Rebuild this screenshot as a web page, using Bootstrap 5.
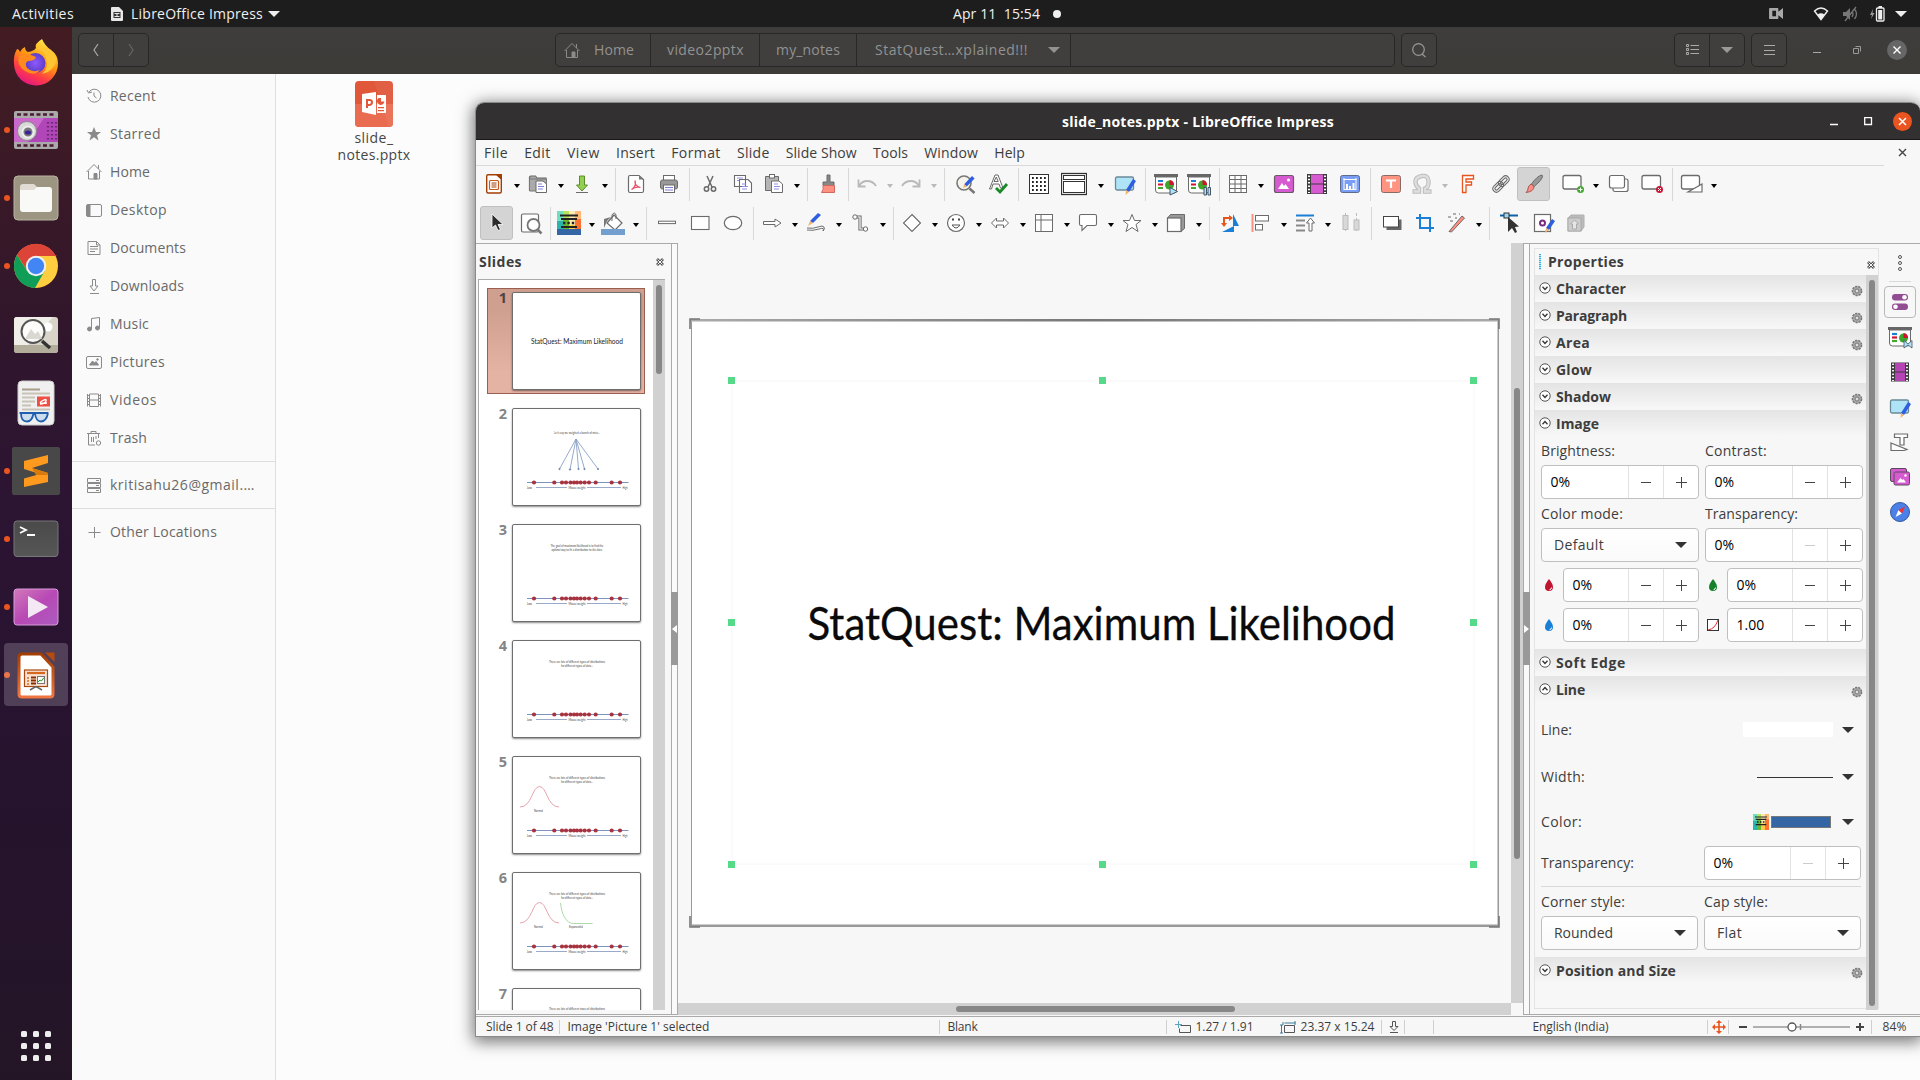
<!DOCTYPE html>
<html lang="en">
<head>
<meta charset="utf-8">
<meta name="viewport" content="width=device-width, initial-scale=1">
<title>slide_notes.pptx - LibreOffice Impress</title>
<link href="https://cdn.jsdelivr.net/npm/bootstrap@5.3.0/dist/css/bootstrap.min.css" rel="stylesheet">
<style>
html,body{height:100%}
body{font-family:"Open Sans","Noto Sans",sans-serif;font-size:14px;line-height:18px;color:#3d3d3d;overflow:hidden;width:1920px;height:1080px;background:#fcfcfc}
svg{display:block;flex:none;overflow:visible}
.fit{display:inline-block;white-space:nowrap}
/* top panel */
.toppanel{height:27px;background:#1d1d1d;color:#f0f0f0}
.topside{width:953px}
/* dock */
.dock{width:72px;background:linear-gradient(#431c22,#30162c 30%,#2c1433 45%,#25132d 75%,#241526);padding-top:1px}
.dockcell{height:68.13px;width:72px;position:relative;display:flex;align-items:center;justify-content:center}
.dockcell.run::before{content:"";position:absolute;left:4px;top:31px;width:6px;height:6px;border-radius:50%;background:#e95420}
.dockcell.cur::after{content:"";position:absolute;left:4px;top:2px;width:64px;height:63px;border-radius:4px;background:#ffffff30;z-index:0}
.dockcell svg{position:relative;z-index:1}
.appgrid{margin:auto 0 19px 21px;width:30px;gap:6px}
.appgrid i{width:6px;height:6px;border-radius:1.5px;background:#eee}
/* file manager */
.fmhead{height:47px;background:linear-gradient(#3e3d3b,#3d3b38);padding:6px 13px 0 6px;color:#929292}
.fmgrp{height:34px;border:1px solid #282725;border-radius:5px;background:#403f3d;display:flex}
.fmgrp>*{display:flex;align-items:center;justify-content:center;border-right:1px solid #282725}
.fmgrp>*:last-child{border-right:0}
.places{width:204px;border-right:1px solid #dedede;background:#fafafa;padding-top:3px}
.place{height:38px;display:flex;align-items:center;padding-left:14px;color:#696969}
.place svg{margin-right:8px}
.placeline{height:1px;background:#dedede;margin:4px 0}
.fileitem{width:110px;margin:7px 0 0 43px;color:#474747;line-height:17px;text-align:center}
/* impress window */
.officewin{position:absolute;left:475px;top:102px;width:1445px;height:935px;border:1px solid #8a8a8a;border-right:0;border-radius:9px 9px 0 0;box-shadow:0 3px 16px 2px #0008;background:#f7f7f7;overflow:hidden}
.wintitle{height:37px;background:#323030;color:#fff;font-weight:700;border-bottom:1px solid #1b1a1a}
.closebtn{width:19px;height:19px;border-radius:50%;background:#e95420}
.menus{height:25px;padding-left:8px}
.menus span.fit{margin-right:16.2px}
.hair{height:1px;background:#d9d9d9}
.toolrow{height:34px;padding-left:4px}
.tb{width:33px;height:34px;display:flex;align-items:center;justify-content:center;flex:none;border-radius:3px}
.tb.split{width:44px;justify-content:flex-start;padding-left:2px}
.tb.wide{width:53px}
.tb.on{background:#d4d4d4;border:1px solid #c0c0c0}
.tb .dd{border:3.3px solid transparent;border-top:4.5px solid #000;border-bottom:0;margin:3px 0 0 6.5px}
.tb.off .dd{border-top-color:#b9b9b9}
.tsep{width:1px;height:33px;background:#d8d8d8;margin:0 3.5px;flex:none}
.workarea{height:772px}
.slidespane{width:195px;border-top:1px solid #aaa;border-bottom:1px solid #aaa}
.slidelist{width:187px;margin-left:2px;height:731px;border-left:1px solid #aaa;border-top:1px solid #aaa;background:#fff;overflow:hidden}
.track{background:#d1d1d1;width:12px;flex:none}
.thumbbar{background:#878787;border-radius:3px}
.splitter{width:7px;border:1px solid #aaa;display:flex;align-items:center;background:#fafafa}
.grip{width:7px;margin-left:-1px;height:73px;background:#999;flex:none;margin-top:-1px}
.slrow{height:106px;margin:0 8px 10px 8px;border:1px solid transparent;padding:3px 2px 3px 0}
.slrow.sel{background:linear-gradient(#cf9f8f 20%,#e5b3a4 80%);border-color:#9a5f4e}
.slno{width:24px;text-align:center;font-size:14.5px;font-weight:700;color:#858585;line-height:12px;padding-left:6px}
.slrow.sel .slno{color:#4d4543}
.sheet{width:129px;height:98px;border:1px solid #6e6e6e;border-radius:2px;background:#fff;box-shadow:0 1px 2px #0007}
.slide{margin:76px 0 0 12px;width:809px;height:607px}
/* properties */
.deck{width:345px;margin:4px 0 5px 4px;border:1px solid #e3e3e3}
.decktitle{height:26px;padding-left:4px}
.grab{width:2px;height:16px;background:repeating-linear-gradient(#35aee0 0 1px,#bfe8f7 1px 2px)}
.sect{height:27px;background:linear-gradient(#e4e4e4,#f7f7f7 96%);width:331px;padding:0 3px 0 4px;font-weight:700}
.sect svg:first-child{margin-top:-2px;margin-right:5px}
.sect svg.gear{margin:5px 0 0 auto}
.sectbody{padding-left:6px;width:331px}
.lab{height:29px}
.spin{height:34px;border:1px solid #bfbfbf;border-radius:4px;background:#fff;color:#000;display:flex;align-items:center}
.spin span:first-child{padding-left:8.5px;flex:1}
.spin i{width:35px;height:32px;border-left:1px solid #e2e2e2;display:flex;align-items:center;justify-content:center;color:#444}
.spin i.dis{color:#ccc}
.combo{height:34px;border:1px solid #bfbfbf;border-radius:4px;background:linear-gradient(#fff,#fafafa);display:flex;align-items:center;justify-content:space-between;padding:0 11px 0 12px}
.car{border:6px solid transparent;border-top:6px solid #333;border-bottom:0}
.tabs{width:41px;padding-top:10px}
.tabcell{width:32px;height:35px;display:flex;align-items:center;justify-content:center;margin-left:5px}
.tabcell.cur{height:32px;border:1px solid #b9b9b9;border-radius:4px;margin-top:4px;margin-bottom:1px}
/* status bar */
.status{height:21px;border-top:1px solid #aaa;font-size:12px}
.status u{width:1px;height:14px;background:#d0d0d0;flex:none}
</style>
</head>
<body>
<svg width="0" height="0" style="position:absolute">
<defs>
<linearGradient id="ff" x1="0.8" y1="0" x2="0.3" y2="1"><stop offset="0" stop-color="#fff44f"/><stop offset=".45" stop-color="#ff980e"/><stop offset=".75" stop-color="#ff3b47"/><stop offset="1" stop-color="#e31587"/></linearGradient>
<radialGradient id="ffp"><stop offset="0" stop-color="#9059ff"/><stop offset="1" stop-color="#5b3ec8"/></radialGradient>
<linearGradient id="pk" x1="0" y1="0" x2="1" y2="1"><stop offset="0" stop-color="#d279ba"/><stop offset=".5" stop-color="#b849b5"/><stop offset="1" stop-color="#ab5cc0"/></linearGradient>
<linearGradient id="tm" x1="0" y1="0" x2="0" y2="1"><stop offset="0" stop-color="#4a4a4a"/><stop offset="1" stop-color="#565656"/></linearGradient>
<linearGradient id="org" x1="0" y1="0" x2="0" y2="1"><stop offset="0" stop-color="#a33e03"/><stop offset="1" stop-color="#ef7641"/></linearGradient>
<linearGradient id="edge"><stop offset="0" stop-color="#aaa"/><stop offset=".5" stop-color="#777"/><stop offset="1" stop-color="#aaa"/></linearGradient>
<g id="pencil"><path d="M8-9l2.600 2.600-7.800 8-2.600-2.400z" fill="#2f5fe0"/><path d="M.200-.800l2.600 2.400L-1 3z" fill="#f5b26b"/></g>
<g id="pal"><path fill="#6ee0c0" d="M-12-12h6v24h-6z"/><path fill="#b8e35b" d="M-6-12h6v24h-6z"/><path fill="#ffe9b0" d="M0-12h6v24H0z"/><path fill="#ffb877" d="M6-12h6v24H6z"/><path fill="#2bb3ae" d="M-12-2h6v14h-6z"/><path fill="#69b52b" d="M-6-4h6v16h-6z"/><path fill="#ffc847" d="M0 2h6v10H0z"/><path fill="#ff7033" d="M6-4h6v16H6z"/><path d="M-9-7.500H9M-8-4H8M-8 4H8" stroke="#222" stroke-width="1.800"/><path d="M-6 0H7" stroke="#222" stroke-width="2.400" stroke-dasharray="2.400 2"/></g>

<symbol id="i-new" viewBox="-13 -13 26 26"><path d="M-6-9.300H3L7.300-5V7.500q0 1.500-1.500 1.500h-11.600q-1.500 0-1.500-1.500v-15.300q0-1.500 1.300-1.500z" fill="#fff" stroke="#a33e03" stroke-width="1.400"/><path d="M1-9.900h7V-4z" fill="#a33e03"/><rect x="-4.500" y="-3.500" width="9" height="9" rx="1" fill="none" stroke="#c55a20" stroke-width="1.200"/><path d="M-2.500-1h5M-2.500 1h5M-2.500 3h5" stroke="#a33e03"/></symbol>
<symbol id="i-open" viewBox="-13 -13 26 26"><path d="M-8.500 6.500v-13.500l1-1h5l1.500 2h9v3.500" fill="#aaa" stroke="#6b6b6b" stroke-width="1.200"/><path d="M-8.500 7V-5h17v12z" fill="#aaa" stroke="#777"/><path d="M-2-3h7l3.500 3v8.500H-2z" fill="#fff" stroke="#6b6b6b"/><path d="M0 0h4M0 2.500h6M0 5h5" stroke="#7f7fe0"/></symbol>
<symbol id="i-save" viewBox="-13 -13 26 26"><path d="M-2.500-8h5V1h3L0 7l-5.500-6h3z" fill="#92d050" stroke="#5e8a2b"/><path d="M-6 8.500H6" stroke="#6b6b6b"/></symbol>
<symbol id="i-pdf" viewBox="-13 -13 26 26"><path d="M-6-8.500h9l4.500 4v11.500q0 1.500-1.500 1.500H-6q-1.500 0-1.500-1.500V-7q0-1.500 1.500-1.500z" fill="#fff" stroke="#6b6b6b" stroke-width="1.200"/><path d="M3-8.500v4h4.500z" fill="#777"/><path d="M-4.500 5.500Q1 2-1-3.500q-.800 5.500 5.500 7Q0 2-4.500 5.500z" fill="none" stroke="#e8536a" stroke-width="1.200"/></symbol>
<symbol id="i-print" viewBox="-13 -13 26 26"><rect x="-5.500" y="-8.500" width="11" height="5" fill="#fff" stroke="#6b6b6b"/><rect x="-8.500" y="-4" width="17" height="9" rx="2" fill="#999" stroke="#6b6b6b"/><rect x="-5.500" y="1" width="11" height="7.500" fill="#fff" stroke="#6b6b6b"/><path d="M-4 3.500h8M-4 6h8" stroke="#7f7fe0"/></symbol>
<symbol id="i-cut" viewBox="-13 -13 26 26"><g fill="none" stroke="#6b6b6b" stroke-width="1.500"><path d="M-3-8l5 11M3-8l-5 11"/><circle cx="-3.500" cy="5" r="2.200"/><circle cx="3.500" cy="5" r="2.200"/></g></symbol>
<symbol id="i-copy" viewBox="-13 -13 26 26"><g fill="#fff" stroke="#6b6b6b" stroke-width="1.100"><path d="M-8.500-8.500h11v11h-11zM-3.500-4.500H5L8.500-1v9.500h-12z"/></g><path d="M-6-6h6M-6-3.500h2M-1 0h4M-1 2.500h6M-1 5h5" stroke="#8f8fe8"/></symbol>
<symbol id="i-paste" viewBox="-13 -13 26 26"><path d="M-8.500-7.500h13v14h-13z" fill="#b5b5b5" stroke="#6b6b6b"/><rect x="-4.500" y="-9.500" width="5" height="3.500" fill="#fff" stroke="#6b6b6b"/><path d="M-2.500-3H5L8.500 0v8.500h-11z" fill="#fff" stroke="#6b6b6b"/><path d="M0 0h4M0 2.500h6M0 5h5" stroke="#8f8fe8"/></symbol>
<symbol id="i-clone" viewBox="-13 -13 26 26"><path d="M-1-9h3v7h4v3.500h-11v-3.500h4z" fill="#888" stroke="#6b6b6b"/><path d="M-5 1.500H6.500v7h-13q2.500-3 1.500-7z" fill="#ff8f80" stroke="#d06a60"/></symbol>
<symbol id="i-undo" viewBox="-13 -13 26 26"><path d="M-8.500-4.500v7h7M-8 2q3-5 8-5 6 0 9 5" fill="none" stroke="#b9b9b9" stroke-width="1.800"/></symbol>
<symbol id="i-redo" viewBox="-13 -13 26 26"><path d="M8.500-4.500v7h-7M8 2q-3-5-8-5-6 0-9 5" fill="none" stroke="#b9b9b9" stroke-width="1.800"/></symbol>
<symbol id="i-find" viewBox="-13 -13 26 26"><circle cx="-1" cy="-1" r="7" fill="#f6f3ea" stroke="#777" stroke-width="1.600"/><path d="M4.500 4.500l5 4.500" stroke="#777" stroke-width="2.500"/><use href="#pencil" x="-1" y="1"/></symbol>
<symbol id="i-spell" viewBox="-13 -13 26 26"><path d="M-8.500 5l5.500-14h3L5 4H2.500L1 0h-6l-1.500 5zM-4-2.500H.200L-1.700-7z" fill="#fff" stroke="#6b6b6b"/><path d="M-2 4l4 4 7-8" fill="none" stroke="#188a28" stroke-width="2.800"/></symbol>
<symbol id="i-grid" viewBox="-13 -13 26 26"><rect x="-9.500" y="-9.500" width="19" height="19" fill="#fff" stroke="#333"/><g stroke="#222" stroke-width="1.800" stroke-dasharray="1.800 2.200"><path d="M-7-6H8M-7-2H8M-7 2H8M-7 6H8"/></g></symbol>
<symbol id="i-views" viewBox="-13 -13 26 26"><g fill="#fff" stroke="#333"><rect x="-12.500" y="-10.500" width="25" height="21" stroke-width="1.300"/><rect x="-10.500" y="-8.500" width="21" height="4"/><rect x="-10.500" y="-2.500" width="21" height="11"/></g></symbol>
<symbol id="i-master" viewBox="-13 -13 26 26"><rect x="-9.500" y="-7" width="18" height="13" rx="1.500" fill="#aee3f8" stroke="#6b8a96" stroke-width="1.300"/><path d="M8-5l3 2-7 11-3-2z" fill="#2f5fe0"/><path d="M1 6l3 2-3.500 3z" fill="#f5b26b"/></symbol>
<g id="pres"><path d="M-12-8.500h24" stroke="#666" stroke-width="3"/><path d="M-10.500-7V6q0 3 3 3h15q3 0 3-3V-7z" fill="#fff" stroke="#6b6b6b"/><path d="M-8-3h5" stroke="#1c7fd6" stroke-width="2.200"/><path d="M-8 .500h5" stroke="#d0142f" stroke-width="2.200"/><path d="M-8 4h5" stroke="#43a82e" stroke-width="2.200"/><circle cx="3.500" cy="1" r="4.500" fill="#3fa52b"/><path d="M3.500 1v-5a5 5 0 0 1 4.500 5z" fill="#d0142f"/></g>
<symbol id="i-play" viewBox="-13 -13 26 26"><use href="#pres"/><path d="M4 3.500l7.500 4L4 11z" fill="#aee3f8" stroke="#456"/></symbol>
<symbol id="i-pause" viewBox="-13 -13 26 26"><use href="#pres"/><path d="M5 3.500h2.500V11H5zM9 3.500h2.500V11H9z" fill="#aee3f8" stroke="#456"/></symbol>
<symbol id="i-trans" viewBox="-13 -13 26 26"><use href="#pres"/><path d="M4 3.500l4 3.500 4-3.500V11L8 8l-4 3z" fill="#aee3f8" stroke="#456" stroke-width=".8"/></symbol>
<symbol id="i-table" viewBox="-13 -13 26 26"><rect x="-8.500" y="-8.500" width="17" height="17" fill="#fff" stroke="#6b6b6b"/><path d="M-3-8v16M3-8v16M-8-4.500H8M-8 0H8M-8 4.500H8" stroke="#6b6b6b"/></symbol>
<symbol id="i-image" viewBox="-13 -13 26 26"><rect x="-9.500" y="-8.500" width="19" height="17" rx="2" fill="#d75bd0" stroke="#6b5a6b" stroke-width="1.200"/><path d="M-6 5l4-6 2 3 1.500-2L5 5z" fill="#fff"/><circle cx="4.500" cy="-4" r="1.600" fill="#fff"/></symbol>
<symbol id="i-video" viewBox="-13 -13 26 26"><rect x="-10" y="-10" width="20" height="20" fill="#3d3d3d"/><path d="M-6-9.500H6v9H-6zM-6 .500H6v9H-6z" fill="#d65bd0"/><path d="M-8-8.500V9M8-8.500V9" stroke="#fff" stroke-width="2" stroke-dasharray="1.500 1.800"/></symbol>
<symbol id="s-anim" viewBox="-13 -13 26 26"><rect x="-9" y="-9.500" width="18" height="19" fill="#3d3d3d"/><path d="M-5-9H5v8.500H-5zM-5 .500H5V9H-5z" fill="#b545b5"/><path d="M-7-8.500V9M7-8.500V9" stroke="#fff" stroke-width="1.800" stroke-dasharray="1.500 1.800"/></symbol>
<symbol id="i-chart" viewBox="-13 -13 26 26"><rect x="-9.500" y="-8.500" width="19" height="17" rx="2" fill="#7a9df5" stroke="#5b6b8a"/><path d="M-6-6V6M-6 5.500H6.500M6-6V5M-6.500-4.500H6.500" stroke="#fff"/><path d="M-4 5V0h2v5zM-1 5v-3h2v3zM2.500 5v-6h2v6z" fill="#fff"/></symbol>
<symbol id="i-text" viewBox="-13 -13 26 26"><rect x="-9.500" y="-8.500" width="19" height="17" rx="2" fill="#ff9482" stroke="#8a6a66"/><path d="M-5-3.500H5M0-3.500v7.500" stroke="#fff" stroke-width="2.200"/></symbol>
<symbol id="i-omega" viewBox="-13 -13 26 26"><path d="M-9.500 7.500h6.500V4.500Q-7 1-6.500-3T0-8t6.500 5-3.500 7.500v3h6.500" fill="none" stroke="#bcbcbc" stroke-width="4.400"/><path d="M-8.500 7.500h5.500V4.500Q-7 1-6.500-3T0-8t6.500 5-3.500 7.500v3h5.500" fill="none" stroke="#dedede" stroke-width="2.400"/></symbol>
<symbol id="i-font" viewBox="-13 -13 26 26"><path d="M-5.500-8.500h11v3.500h-7.500v3h5.500v3h-5.500v7.500h-3.500z" fill="#fff" stroke="#e8541c" stroke-width="1.300"/></symbol>
<symbol id="i-link" viewBox="-13 -13 26 26"><g transform="rotate(-45)" fill="none" stroke="#6b6b6b" stroke-width="1.100"><rect x="-10" y="-3.500" width="12" height="7" rx="3.500"/><rect x="-8" y="-1.500" width="8" height="3" rx="1.500"/><rect x="-2" y="-3.500" width="12" height="7" rx="3.500"/><rect x="0" y="-1.500" width="8" height="3" rx="1.500"/></g></symbol>
<symbol id="i-brush" viewBox="-13 -13 26 26"><path d="M8-9q2 2-4 8l-4 3.500L-2.500 0Q3-8 8-9z" fill="#999" stroke="#6b6b6b"/><path d="M-3 0l3 2.500q0 5-8 6 2-1.500 2-4T-3 0z" fill="#ff8f80" stroke="#a55"/></symbol>
<symbol id="i-newslide" viewBox="-13 -13 26 26"><rect x="-10" y="-8.500" width="18" height="13.500" rx="2" fill="#fff" stroke="#6b6b6b" stroke-width="1.300"/><circle cx="7.500" cy="5.500" r="3.500" fill="#43a82e"/><path d="M5.500 5.500h4M7.500 3.500v4" stroke="#fff"/></symbol>
<symbol id="i-dup" viewBox="-13 -13 26 26"><g fill="#fff" stroke="#6b6b6b" stroke-width="1.200"><rect x="-6" y="-5" width="15" height="12.500" rx="2"/><rect x="-9.500" y="-8.500" width="15" height="12.500" rx="2"/></g></symbol>
<symbol id="i-del" viewBox="-13 -13 26 26"><rect x="-10" y="-8.500" width="18.500" height="13.500" rx="2" fill="#fff" stroke="#6b6b6b" stroke-width="1.300"/><circle cx="7.500" cy="5.500" r="3.500" fill="#c9183a"/><path d="M6 4l3 3M9 4L6 7" stroke="#fff"/></symbol>
<symbol id="i-layout" viewBox="-13 -13 26 26"><rect x="-9.500" y="-8.500" width="18" height="13.500" rx="2" fill="#fff" stroke="#6b6b6b" stroke-width="1.300"/><path d="M11 0v8H-3z" fill="#fff" stroke="#6b6b6b" stroke-width="1.200"/></symbol>

<symbol id="i-select" viewBox="-13 -13 26 26"><path d="M-5-9v14l3.500-3L1 7.500l2.500-1L1 1.500h5z" fill="#2c2c2c" stroke="#fff" stroke-width=".8"/></symbol>
<symbol id="i-zoom" viewBox="-13 -13 26 26"><rect x="-8.500" y="-9" width="17" height="18" rx="1.500" fill="#fff" stroke="#6b6b6b" stroke-width="1.200"/><circle cx="3.500" cy="2" r="6" fill="#fff" stroke="#777" stroke-width="1.800"/><path d="M8 7l3.500 3.500" stroke="#777" stroke-width="2.500"/></symbol>
<symbol id="i-linecol" viewBox="-13 -13 26 26"><use href="#pal"/><path fill="#3465a4" d="M-12 6h24v6h-24z"/></symbol>
<symbol id="i-fillcol" viewBox="-13 -13 26 26"><path d="M-9 5v-9l7-2-4 4z" fill="#777"/><path d="M1-8l8 8-7 7-8-7z" fill="#fff" stroke="#6b6b6b" stroke-width="1.200"/><path d="M-1-2v-6q2.500-4 4 0v4" fill="none" stroke="#6b6b6b"/><path fill="#729fcf" d="M-12 6h24v6h-24z"/></symbol>
<symbol id="i-line" viewBox="-13 -13 26 26"><rect x="-8.500" y="-1.800" width="17" height="2.400" fill="#fff" stroke="#6b6b6b"/></symbol>
<symbol id="i-rect" viewBox="-13 -13 26 26"><rect x="-8.500" y="-6.500" width="17.500" height="13" fill="#fff" stroke="#6b6b6b" stroke-width="1.100"/></symbol>
<symbol id="i-oval" viewBox="-13 -13 26 26"><ellipse rx="8.700" ry="6.700" fill="#fff" stroke="#6b6b6b" stroke-width="1.200"/></symbol>
<symbol id="i-arrow" viewBox="-13 -13 26 26"><path d="M-8.500-1.500H3V-4l6 4-6 4V1.500H-8.500z" fill="#fff" stroke="#6b6b6b"/></symbol>
<symbol id="i-curve" viewBox="-13 -13 26 26"><path d="M2-10l3 2-8 8-3-2z" fill="#2f5fe0"/><path d="M-6-2l3 2-5 3z" fill="#f5b26b"/><path d="M-9 7q6 1 12-1t4 2q2-2 1-4t-6 0-11 1" fill="#fff" stroke="#6b6b6b"/></symbol>
<symbol id="i-conn" viewBox="-13 -13 26 26"><path d="M-4-6h4V6h4" fill="none" stroke="#6b6b6b" stroke-width="3.200"/><path d="M-4-6h4V6h4" fill="none" stroke="#fff" stroke-width="1.200"/><g fill="#fff" stroke="#6b6b6b"><circle cx="-5" cy="-6" r="2.200"/><circle cx="5.500" cy="6" r="2.200"/></g></symbol>
<symbol id="i-diamond" viewBox="-13 -13 26 26"><path d="M0-8.500L8.500 0 0 8.500-8.500 0z" fill="#fff" stroke="#6b6b6b" stroke-width="1.100"/></symbol>
<symbol id="i-smile" viewBox="-13 -13 26 26"><circle r="8.500" fill="#fff" stroke="#6b6b6b" stroke-width="1.200"/><path d="M-4-3.500h2M2-3.500h2" stroke="#444" stroke-width="2"/><path d="M-4 2q4 6 8 0z" fill="#fff" stroke="#555"/></symbol>
<symbol id="i-dbl" viewBox="-13 -13 26 26"><path d="M-8.500 0l5-5v3h7v-3l5 5-5 5V2h-7v3z" fill="#fff" stroke="#6b6b6b"/></symbol>
<symbol id="i-flow" viewBox="-13 -13 26 26"><rect x="-8.500" y="-8.500" width="17" height="17" fill="#fff" stroke="#6b6b6b"/><path d="M-3-8v16M-8-3H8" stroke="#6b6b6b"/></symbol>
<symbol id="i-call" viewBox="-13 -13 26 26"><path d="M-7-8.500H7q1.500 0 1.500 1.500v8q0 1.500-1.500 1.500H-1l-5 5v-5h-1q-1.500 0-1.500-1.500v-8q0-1.500 1.500-1.500z" fill="#fff" stroke="#6b6b6b" stroke-width="1.100"/></symbol>
<symbol id="i-star" viewBox="-13 -13 26 26"><path d="M0-8.500l2.500 6H9L4 1.500l2 7-6-4-6 4 2-7-5-4h6.500z" fill="#fff" stroke="#6b6b6b"/></symbol>
<symbol id="i-cube" viewBox="-13 -13 26 26"><path d="M-8.500-5l3-3.500h14v14L5 8.500z" fill="#999" stroke="#6b6b6b"/><rect x="-8.500" y="-5" width="13.500" height="13.500" fill="#fff" stroke="#6b6b6b" stroke-width="1.200"/></symbol>
<symbol id="i-rot" viewBox="-13 -13 26 26"><path d="M3-9l6 12H3zM-8 9H4V3z" fill="#1c7fd6"/><path d="M-6 2v-7h6" fill="none" stroke="#e8541c" stroke-width="2"/><path d="M-9 0h6l-3 4zM-1-8v6l4-3z" fill="#e8541c"/></symbol>
<symbol id="i-align" viewBox="-13 -13 26 26"><path d="M-8.500-9V9" stroke="#ff8f80" stroke-width="2"/><g fill="#fff" stroke="#6b6b6b"><rect x="-5.500" y="-7.500" width="13" height="5.500"/><rect x="-5.500" y="1.500" width="7" height="5.500"/></g></symbol>
<symbol id="i-arr" viewBox="-13 -13 26 26"><path d="M-9-7.500H9" stroke="#1c7fd6" stroke-width="2"/><path d="M-9-2.500h9M-9 2.500h9M-9 7.500h9" stroke="#888" stroke-width="2"/><path d="M5.500-5l4 5h-2.500v8H4V0H1.500z" fill="#fff" stroke="#6b6b6b"/></symbol>
<symbol id="i-dist" viewBox="-13 -13 26 26"><path d="M-5.500-10V10M5.500-10V10" stroke="#bbb" stroke-dasharray="3 2"/><g fill="#d8d8d8" stroke="#bbb"><rect x="-8" y="-7.500" width="5" height="14"/><rect x="3" y="-3" width="5" height="10"/></g></symbol>
<symbol id="i-shadow" viewBox="-13 -13 26 26"><rect x="-5.500" y="-3.500" width="15" height="10.500" fill="#666"/><rect x="-8.500" y="-6.500" width="15" height="10.500" fill="#fff" stroke="#444"/></symbol>
<symbol id="i-crop" viewBox="-13 -13 26 26"><path d="M-5-9V5H9M-9-5H5V9" fill="none" stroke="#1c7fd6" stroke-width="2"/></symbol>
<symbol id="i-wand" viewBox="-13 -13 26 26"><path d="M-7 8.500L6-7l2.500 2L-4.500 9z" fill="#ff8f80" stroke="#6b6b6b"/><path d="M-8-6h3M-3-9h3M-6-2h3M-1-5h2M3-9h1" stroke="#666"/></symbol>
<symbol id="i-pts" viewBox="-13 -13 26 26"><path d="M-10-7.500H8" stroke="#0e62a8" stroke-width="2"/><rect x="-6" y="-10" width="5" height="5" fill="#9ad8f5" stroke="#333"/><path d="M-2-6V9l4-4 3 5 2-1-2-5 4-.500z" fill="#333"/></symbol>
<symbol id="i-glue" viewBox="-13 -13 26 26"><rect x="-8.500" y="-8.500" width="16" height="17" fill="#fff" stroke="#6b6b6b" stroke-width="1.200"/><circle cx="-.500" cy="0" r="2.500" fill="none" stroke="#7b2d82" stroke-width="2"/><path d="M9-4l3 2-6 9-3-2z" fill="#2f5fe0"/><path d="M3 5l3 2-4 3z" fill="#f5b26b"/></symbol>
<symbol id="i-ext" viewBox="-13 -13 26 26"><path d="M-8-5l3-3h13v12l-3 4H-8z" fill="#bbb" stroke="#b0b0b0"/><rect x="-8" y="-5" width="13" height="13" fill="#ccc" stroke="#aaa"/><path d="M-1.500-3l4 4H.500v5h-4V1h-2z" fill="#e6e6e6" stroke="#aaa"/></symbol>

<symbol id="s-props" viewBox="-13 -13 26 26"><rect x="-8" y="-8" width="16" height="6.500" rx="3.200" fill="#924c92"/><rect x="-8" y="1.500" width="16" height="6.500" rx="3.200" fill="#924c92"/><circle cx="4.500" cy="-4.800" r="2.300" fill="#fff"/><circle cx="-4.500" cy="4.800" r="2.300" fill="#fff"/></symbol>
<symbol id="s-style" viewBox="-13 -13 26 26"><path d="M-5.500-8H7.500v3.500H4V3H0v-7.500h-5.500zM-9 1L7 7.500 4 8.500H-9z" fill="#fff" stroke="#6b6b6b" stroke-width="1.200"/></symbol>
<symbol id="s-gal" viewBox="-13 -13 26 26"><rect x="-9.500" y="-8.500" width="16" height="13" rx="1.500" fill="#d75bd0" stroke="#5b4a5b"/><rect x="-6" y="-5" width="15.500" height="13" rx="1.500" fill="#d75bd0" stroke="#5b4a5b"/><path d="M-3 5.500l3.500-4.500 2 2 1-1L6 5.500z" fill="#fff"/><circle cx="5.500" cy="-1.500" r="1.200" fill="#fff"/></symbol>
<symbol id="s-nav" viewBox="-13 -13 26 26"><circle r="9.500" fill="#4a80e8" stroke="#355a9c"/><path d="M-4.500 5l3-7L2 1.500z" fill="#fff"/><path d="M5-5.500L-1.500-2 2 1.500z" fill="#e33"/></symbol>

<symbol id="gear" viewBox="-6 -6 12 12"><circle r="4.600" fill="#aaa" stroke="#777" stroke-width="1.500" stroke-dasharray="2.200 1"/><circle r="2" fill="#ddd" stroke="#777"/></symbol>
<symbol id="dn" viewBox="-6 -6 12 12"><circle r="5.200" fill="#fff" stroke="#555"/><path d="M-2.500-1.200L0 1.500l2.500-2.700" fill="none" stroke="#333" stroke-width="1.300"/></symbol>
<symbol id="up" viewBox="-6 -6 12 12"><circle r="5.200" fill="#fff" stroke="#555"/><path d="M-2.500 1.200L0-1.500l2.500 2.700" fill="none" stroke="#333" stroke-width="1.300"/></symbol>
<symbol id="xx" viewBox="-4 -4 8 8"><path d="M-3-3l6 6M3-3l-6 6" stroke="#555" stroke-width="2.800"/><path d="M-2.500-2.500l5 5M2.500-2.500l-5 5" stroke="#f7f7f7" stroke-width="1"/></symbol>
<symbol id="mi" viewBox="-6 -6 12 12"><path d="M-5 .500h10" stroke="currentColor"/></symbol>
<symbol id="pl" viewBox="-6 -6 12 12"><path d="M-5 .500h11M.500-5v11" stroke="currentColor"/></symbol>
<symbol id="drop" viewBox="-5 -7 10 14"><path d="M0-6q4 5 4 8a4 4 0 0 1-8 0q0-3 4-8z" fill="currentColor"/><path d="M2.500 2.500q0 2-2 2.300" stroke="#fff" fill="none"/></symbol>
</defs>
</svg>

<div class="d-flex flex-column h-100">
  <header class="toppanel d-flex align-items-center">
    <div class="topside d-flex align-items-center">
      <span class="fit" data-w="62" style="margin-left:12px">Activities</span>
      <svg width="12" height="14" viewBox="0 0 12 14" style="margin-left:37px"><path d="M0 1q0-1 1-1h7l4 4v9q0 1-1 1H1q-1 0-1-1z" fill="#e8e8e8"/><rect x="2.500" y="5" width="7" height="6" fill="#333"/><path d="M3.500 6.500h5M3.500 9.500h5M6 6v4" stroke="#e8e8e8"/></svg>
      <span class="fit" data-w="132" style="margin-left:8px">LibreOffice Impress</span>
      <span class="car" style="border-top-color:#eee;margin-left:5px"></span>
    </div>
    <span class="fit" data-w="87" style="white-space:pre">Apr 11  15:54</span>
    <svg width="8" height="8" style="margin-left:13px"><circle cx="4" cy="4" r="4" fill="#f0f0f0"/></svg>
    <svg width="15" height="13" viewBox="0 0 16 14" style="margin-left:708px"><path d="M0 2q0-1 1-1h8q1 0 1 1v3l5-4v12l-5-4v3q0 1-1 1H1q-1 0-1-1z" fill="#a9a9a9"/><rect x="3.500" y="4" width="4" height="6" fill="#1d1d1d"/></svg>
    <svg width="16" height="14" viewBox="0 0 16 14" style="margin-left:29px"><path d="M1.500 4Q8-2 14.500 4L8 12.500z" fill="none" stroke="#eee" stroke-width="1.400"/><path d="M4.500 7.500q3.500-2.500 7 0L8 13z" fill="#eee"/></svg>
    <svg width="16" height="14" viewBox="0 0 16 14" style="margin-left:13px"><path d="M1 5h3l4-4v12L4 9H1z" fill="#777"/><path d="M10 4q2 3 0 6M12.500 2q4 5 0 10M14 0L3 14" stroke="#777" fill="none" stroke-width="1.300"/></svg>
    <svg width="15" height="16" viewBox="0 0 15 16" style="margin-left:12px"><path d="M3 3L0 9h2l-1 4 3.500-6h-2z" fill="#999"/><rect x="6.500" y="2" width="7.500" height="13" rx="1" fill="none" stroke="#eee" stroke-width="1.300"/><path d="M8.200 4h4v9.500h-4zM8.500 0h3.500v2H8.500z" fill="#eee"/></svg>
    <span class="car" style="border-top-color:#eee;margin-left:10px"></span>
  </header>

  <div class="d-flex flex-grow-1">
    <nav class="dock d-flex flex-column">
      <div class="dockcell"><svg width="48" height="48" viewBox="-24 -24 48 48"><path d="M-19-13q2 0 3 3 2-4 5-5 0 4 3 5 6-1 8-4-2-4 6-9 3 7 9 11 7 5 7 13A22 22 0 0 1-22 2q-1-8 3-15z" fill="url(#ff)"/><circle cx="-.500" cy="1" r="10" fill="url(#ffp)"/><path d="M-17-6q8-4 17 1-1 4-8 4-4 2-1 7 5 5 13 2Q-2 15-11 9t-6-15z" fill="#ff8a1d"/><path d="M-1-14q9 1 11 10 3 10-4 16 13-3 15-16-2 0-3-4-2-5-10-7z" fill="#ffc634"/></svg></div>
      <div class="dockcell run"><svg width="48" height="48" viewBox="-24 -24 48 48"><rect x="-22" y="-19" width="44" height="38" rx="2" fill="#aaa"/><path d="M-19-15.500h38M-19 15.500h38" stroke="#4a1d33" stroke-width="2.500" stroke-dasharray="4 2.500"/><path d="M-22-12h44v24h-44z" fill="#b046b8"/><path d="M-22-12h30l-16 24h-14z" fill="#ca68cc"/><path d="M12-8V10M16-8V10M20-8V10" stroke="#6b2a74" stroke-width="2.200" stroke-dasharray="1.500 2.500"/><circle cx="-9" cy="1" r="9.500" fill="#d9d9d9" stroke="#888"/><circle cx="-8" cy="2" r="5.500" fill="#777" stroke="#eee" stroke-width="2"/><ellipse cx="-8" cy="2.500" rx="3" ry="2" fill="#3b1f9b"/></svg></div>
      <div class="dockcell run"><svg width="48" height="48" viewBox="-24 -24 48 48"><rect x="-22" y="-22" width="44" height="44" rx="4" fill="#9c9582" stroke="#b8b2a2"/><path d="M-16-11q0-3 3-3h11l3 3H14v5h-30z" fill="#e0dcd4"/><path d="M-16-8h14l3-3H13q3 0 3 3V11q0 3-3 3h-26q-3 0-3-3z" fill="#f9f9f7"/></svg></div>
      <div class="dockcell run"><svg width="48" height="48" viewBox="-24 -24 48 48"><circle r="22" fill="#ffcd40"/><path d="M-19.050-11A22 22 0 0 1 19.050-11L21-10H0z" fill="#db4437"/><path d="M0-10h20a22 22 0 0 0-39-1l10.500 16z" fill="#db4437"/><path d="M-19.050-11A22 22 0 0 0-1 22L8.700 5-8.700 5z" fill="#0f9d58"/><circle r="10.200" fill="#f1f1f1"/><circle r="8.200" fill="#4285f4"/></svg></div>
      <div class="dockcell"><svg width="48" height="48" viewBox="-24 -24 48 48"><rect x="-22" y="-18" width="44" height="36" rx="3" fill="#d8d5c8"/><path d="M-22-15q0-3 3-3h36L-8 10h-14z" fill="#efeee8"/><path d="M-22 10h44v5q0 3-3 3h-38q-3 0-3-3z" fill="#b3ad9c"/><circle cx="12" cy="-8" r="4.500" fill="#fff"/><circle cx="-3" cy="-3.500" r="11.500" fill="#fffc" stroke="#555" stroke-width="2"/><path d="M-11 4L-5-6l4 5 3-3 4 8z" fill="#d9d9d2"/><path d="M6 6l8 7" stroke="#333" stroke-width="3.500"/></svg></div>
      <div class="dockcell"><svg width="48" height="48" viewBox="-24 -24 48 48"><rect x="-18" y="-22" width="36" height="44" rx="4" fill="#f0f0f0" stroke="#ccc"/><path d="M-14-13.500H4" stroke="#a89c8a" stroke-width="2"/><path d="M-14-9.500h28M-14-5.500h13M-14-1.500h13M-14 2.500h9M-14 6.500h28" stroke="#c9c3b5" stroke-width="2"/><rect x="1" y="-6.500" width="13" height="10" fill="#ee4f44"/><path d="M4 1q5 0 6-3t-4 0 5 2" fill="none" stroke="#fff" stroke-width="1.300"/><path d="M-16.500 10h29M-15 10.500q0 8 6 8 5 0 6.500-8M-1 10.500q1 8 6 8t7-8" fill="#cde" stroke="#1f5fae" stroke-width="1.800"/></svg></div>
      <div class="dockcell run"><svg width="48" height="48" viewBox="-24 -24 48 48"><rect x="-24" y="-24" width="48" height="48" rx="2" fill="#484848"/><path d="M12-16v8L-4-3l16 5v9l-24 5V7.500L4 3l-16-5v-8z" fill="#ff9a1f"/><path d="M-4-3l16 5v2L0 4z" fill="#d97a0c"/></svg></div>
      <div class="dockcell run"><svg width="48" height="48" viewBox="-24 -24 48 48"><rect x="-22" y="-18" width="44" height="35.500" rx="3" fill="url(#tm)" stroke="#777"/><path d="M-16-12l6 3-6 3M-9-4h8" fill="none" stroke="#fff" stroke-width="1.800"/></svg></div>
      <div class="dockcell run"><svg width="48" height="48" viewBox="-24 -24 48 48"><rect x="-22" y="-18" width="44" height="36" rx="3" fill="url(#pk)" stroke="#d99ad9"/><path d="M-8-11L12 0-8 11z" fill="#f5e8f5"/></svg></div>
      <div class="dockcell run cur"><svg width="48" height="48" viewBox="-24 -24 48 48"><path d="M-14-21H5L17-8V19q0 3-3 3h-28q-3 0-3-3v-37q0-3 3-3z" fill="#fff" stroke="url(#org)" stroke-width="3"/><path d="M9-22.500h9.500V-13z" fill="#b84a0c"/><rect x="-11.500" y="-5" width="23" height="16.500" fill="#f9e2d3" stroke="#a84a10" stroke-width="1.200"/><path d="M-9-2H9" stroke="#d6671c" stroke-width="2.200"/><path d="M-9 3h2M-9 6h2M-9 9h2" stroke="#e58a4f" stroke-width="2"/><path d="M-5 2.500h5M-5 5.500h5M-5 8.500h5" stroke="#8a2e00" stroke-width="1.800"/><rect x="1.500" y="1.500" width="7" height="7" fill="#fff" stroke="#777"/><path d="M2 7l2-2 1.500 1L8 2.500" stroke="#2a9a2a" fill="none"/><path d="M-6 15l5-3h2l5 3" stroke="#666" fill="none" stroke-width="1.500"/></svg></div>
      <div class="appgrid d-flex flex-wrap"><i></i><i></i><i></i><i></i><i></i><i></i><i></i><i></i><i></i></div>
    </nav>

    <main class="flex-grow-1 d-flex flex-column">
      <div class="fmhead d-flex">
        <div class="fmgrp" style="width:71px"><span style="width:35px"><svg width="6" height="14" fill="none" stroke="#aaa" stroke-width="1.200"><path d="M5 1L1 7l4 6"/></svg></span><span class="flex-grow-1"><svg width="6" height="14" fill="none" stroke="#666" stroke-width="1.200"><path d="M1 1l4 6-4 6"/></svg></span></div>
        <div class="fmgrp" style="width:840px;margin-left:406px">
          <span class="justify-content-start" style="width:95px;padding-left:8px"><svg width="16" height="15" viewBox="0 0 16 15" fill="none" stroke="#8b8b8b" style="margin-right:14px"><path d="M.500 8L8 .500 15.500 8M2.500 7v7.500h11V7M12.500 1v4"/><path d="M8 9h3v5H8z" fill="#8b8b8b"/></svg><span class="fit" data-w="40">Home</span></span>
          <span style="width:109px;padding-left:1px"><span class="fit" data-w="77">video2pptx</span></span>
          <span style="width:97px"><span class="fit" data-w="64">my_notes</span></span>
          <span class="justify-content-start" style="width:214px;padding-left:18px"><span class="fit" data-w="153">StatQuest…xplained!!!</span><span class="car" style="border-top-color:#929292;margin-left:20px"></span></span>
          <span></span>
        </div>
        <div class="fmgrp" style="width:36px;margin-left:6px"><span class="w-100"><svg width="14" height="15" fill="none" stroke="#999" stroke-width="1.200"><circle cx="6.500" cy="6.500" r="5.800"/><path d="M10 11l3.500 3"/></svg></span></div>
        <div class="fmgrp" style="width:71px;margin-left:237px"><span style="width:35px"><svg width="13" height="12" stroke="#aaa"><path d="M4.500 1.500H13M4.500 5.500H13M4.500 9.500H13"/><path d="M.500.500h2v2h-2zM.500 4.500h2v2h-2zM.500 8.500h2v2h-2z" fill="none"/></svg></span><span class="flex-grow-1"><b class="car" style="border-top-color:#999"></b></span></div>
        <div class="fmgrp" style="width:36px;margin-left:6px"><span class="w-100"><svg width="11" height="11" stroke="#aaa"><path d="M0 .500h11M0 5.500h11M0 9.500h11"/></svg></span></div>
        <div class="d-flex align-items-center" style="height:34px;margin-left:26px">
          <svg width="8" height="8" stroke="#aaa"><path d="M0 6.500h8"/></svg>
          <svg width="8" height="8" style="margin-left:32px" fill="none" stroke="#999"><path d="M.500 2.500h5v5h-5zM2.500.500h5v5"/></svg>
          <svg width="20" height="20" viewBox="-10 -10 20 20" style="margin-left:26px"><circle r="10" fill="#666"/><path d="M-3.500-3.500l7 7M3.500-3.500l-7 7" stroke="#fff" stroke-width="1.400"/></svg>
        </div>
      </div>
      <div class="d-flex flex-grow-1">
        <aside class="places" id="places"></aside>
        <div class="fileitem">
          <svg width="38" height="46" viewBox="0 0 38 46" style="margin:0 auto 2px 36px"><rect width="38" height="46" rx="4" fill="#e0573a"/><path d="M0 23h38v19q0 4-4 4H4q-4 0-4-4z" fill="#e96c50"/><path d="M19 0h15q4 0 4 4v38q0 4-4 4z" fill="#fff" opacity=".06"/><path d="M7 13l14-2v23L7 31z" fill="#fff"/><path d="M22 14h9v18h-9z" fill="#fff"/><path d="M12 27v-8h2.500q2.500 0 2.500 2.300T14.500 24H12" fill="none" stroke="#e0573a" stroke-width="2"/><path d="M23 17h3v3.500h3.500a3.800 3.800 0 1 1-6-3.500zM23 26h6v1.200h-6zM23 29h6v1.200h-6z" fill="#e0573a"/></svg>
          <span class="fit" data-w="39">slide_</span><br><span class="fit" data-w="73">notes.pptx</span>
        </div>
      </div>
    </main>
  </div>
</div>

<section class="officewin">
  <div class="wintitle d-flex align-items-center">
    <span class="fit" data-w="272" style="margin-left:586px;padding-top:1px">slide_notes.pptx - LibreOffice Impress</span>
    <svg width="8" height="10" class="ms-auto" stroke="#fff"><path d="M0 8.500h8" stroke-width="1.300"/></svg>
    <svg width="8" height="8" style="margin-left:26px" fill="none" stroke="#fff" stroke-width="1.300"><path d="M.700.700h6.800v6.800H.700z"/></svg>
    <span class="closebtn d-flex align-items-center justify-content-center" style="margin:0 8px 0 21px"><svg width="9" height="9" stroke="#fff" stroke-width="1.500"><path d="M1 1l7 7M8 1L1 8"/></svg></span>
  </div>
  <div class="menus d-flex align-items-center">
    <span class="fit" data-w="24">File</span><span class="fit" data-w="26.500">Edit</span><span class="fit" data-w="33">View</span><span class="fit" data-w="39">Insert</span><span class="fit" data-w="49.500">Format</span><span class="fit" data-w="32.600">Slide</span><span class="fit" data-w="71">Slide Show</span><span class="fit" data-w="35">Tools</span><span class="fit" data-w="54">Window</span><span class="fit" data-w="30.500">Help</span>
    <svg width="9" height="9" class="ms-auto" style="margin-right:13px" stroke="#444" stroke-width="1.400"><path d="M1 1l7 7M8 1L1 8"/></svg>
  </div>
  <div class="hair" style="width:1408px"></div>
  <div class="toolrow d-flex align-items-center" id="tools1" style="margin-top:1px;padding-left:3px"></div>
  <div class="toolrow d-flex align-items-center" id="tools2" style="margin-top:5px;margin-bottom:3px"></div>

  <div class="workarea d-flex">
    <div class="slidespane">
      <div class="d-flex align-items-center fw-bold" style="height:35px;padding:0 7px 0 3px"><span class="fit" data-w="43">Slides</span><svg class="ms-auto" width="8" height="8"><use href="#xx"/></svg></div>
      <div class="slidelist d-flex"><div id="slides" class="flex-grow-1" style="padding-top:8px"></div><div class="track"><div class="thumbbar" style="height:89px;margin:5px 3px"></div></div></div>
    </div>
    <div class="splitter"><div class="grip d-flex align-items-center"><svg width="7" height="8"><path d="M6 0v8L1 4z" fill="#fff"/></svg></div></div>
    <div class="d-flex flex-column" style="width:845px">
      <div class="d-flex" style="height:760px">
        <div style="width:833px">
          <svg class="slide" viewBox="0 0 809 607">
            <rect x="1" y="1" width="808" height="607" fill="#999"/><rect x="0" y="0" width="809" height="3" fill="url(#edge)"/><rect x="2" y="2.500" width="805.500" height="603" fill="#fff"/>
            <path d="M0 10V0h10M799 0h10v10M0 597v11h10M799 608h10v-11" fill="none" stroke="#777" stroke-width="1.600"/>
            <rect x="42" y="62" width="742" height="483" fill="none" stroke="#f6f6f6"/>
            <text x="117.500" y="321" font-family="Lato,Open Sans,sans-serif" font-size="46.500" textLength="588" lengthAdjust="spacingAndGlyphs" fill="#0a0a0a" stroke="#0a0a0a" stroke-width=".3">StatQuest: Maximum Likelihood</text>
            <g fill="#57d98a"><path d="M38 58h7v7h-7zM409 58h7v7h-7zM780 58h7v7h-7zM38 300h7v7h-7zM780 300h7v7h-7zM38 542h7v7h-7zM409 542h7v7h-7zM780 542h7v7h-7z"/></g>
          </svg>
        </div>
        <div class="track"><div class="thumbbar" style="height:471px;margin:145px 3px 0"></div></div>
      </div>
      <div style="height:12px;width:833px;background:#d1d1d1;padding:3px 0 0 278px"><div class="thumbbar" style="width:279px;height:6px"></div></div>
    </div>
    <div class="splitter"><div class="grip d-flex align-items-center"><svg width="7" height="8"><path d="M1 0v8l5-4z" fill="#fff"/></svg></div></div>
    <div class="d-flex" style="width:390px;border-top:1px solid #aaa;border-bottom:1px solid #aaa">
      <div class="deck">
        <div class="decktitle d-flex align-items-center fw-bold"><span class="grab"></span><span class="fit" data-w="76" style="margin-left:7px">Properties</span><svg class="ms-auto" width="8" height="8" style="margin:5px 3px 0 0"><use href="#xx"/></svg></div>
        <div class="d-flex" style="height:735px">
          <div style="width:332px">
            <div class="sect d-flex align-items-center"><svg width="12" height="12"><use href="#dn"/></svg><span class="fit" data-w="70">Character</span><svg class="gear" width="12" height="12"><use href="#gear"/></svg></div>
            <div class="sect d-flex align-items-center"><svg width="12" height="12"><use href="#dn"/></svg><span class="fit" data-w="71">Paragraph</span><svg class="gear" width="12" height="12"><use href="#gear"/></svg></div>
            <div class="sect d-flex align-items-center"><svg width="12" height="12"><use href="#dn"/></svg><span class="fit" data-w="34">Area</span><svg class="gear" width="12" height="12"><use href="#gear"/></svg></div>
            <div class="sect d-flex align-items-center"><svg width="12" height="12"><use href="#dn"/></svg><span class="fit" data-w="36">Glow</span></div>
            <div class="sect d-flex align-items-center"><svg width="12" height="12"><use href="#dn"/></svg><span class="fit" data-w="55">Shadow</span><svg class="gear" width="12" height="12"><use href="#gear"/></svg></div>
            <div class="sect d-flex align-items-center"><svg width="12" height="12"><use href="#up"/></svg><span class="fit" data-w="43">Image</span></div>
            <div class="sectbody" style="height:212px">
              <div class="lab d-flex align-items-center" style="height:28px"><span style="width:164px"><span class="fit" data-w="74">Brightness:</span></span><span class="fit" data-w="62">Contrast:</span></div>
              <div class="d-flex"><div class="spin" style="width:158px"><span>0%</span><i><svg width="12" height="12"><use href="#mi"/></svg></i><i><svg width="12" height="12"><use href="#pl"/></svg></i></div><div class="spin" style="width:158px;margin-left:6px"><span>0%</span><i><svg width="12" height="12"><use href="#mi"/></svg></i><i><svg width="12" height="12"><use href="#pl"/></svg></i></div></div>
              <div class="lab d-flex align-items-center"><span style="width:164px"><span class="fit" data-w="82">Color mode:</span></span><span class="fit" data-w="93">Transparency:</span></div>
              <div class="d-flex"><div class="combo" style="width:158px"><span class="fit" data-w="50">Default</span><b class="car"></b></div><div class="spin" style="width:158px;margin-left:6px"><span>0%</span><i class="dis"><svg width="12" height="12"><use href="#mi"/></svg></i><i><svg width="12" height="12"><use href="#pl"/></svg></i></div></div>
              <div class="d-flex align-items-center" style="margin-top:6px"><svg width="10" height="14" style="color:#c01530;margin:0 9px 0 3px"><use href="#drop"/></svg><div class="spin" style="width:136px"><span>0%</span><i><svg width="12" height="12"><use href="#mi"/></svg></i><i><svg width="12" height="12"><use href="#pl"/></svg></i></div><svg width="10" height="14" style="color:#14822a;margin:0 9px"><use href="#drop"/></svg><div class="spin" style="width:136px"><span>0%</span><i><svg width="12" height="12"><use href="#mi"/></svg></i><i><svg width="12" height="12"><use href="#pl"/></svg></i></div></div>
              <div class="d-flex align-items-center" style="margin-top:6px"><svg width="10" height="14" style="color:#1c7fd6;margin:0 9px 0 3px"><use href="#drop"/></svg><div class="spin" style="width:136px"><span>0%</span><i><svg width="12" height="12"><use href="#mi"/></svg></i><i><svg width="12" height="12"><use href="#pl"/></svg></i></div><svg width="12" height="12" style="margin:0 8px"><rect x=".500" y=".500" width="11" height="11" fill="#fff" stroke="#333"/><path d="M1 11q7-1 10-10" stroke="#d33" fill="none"/></svg><div class="spin" style="width:136px"><span>1.00</span><i><svg width="12" height="12"><use href="#mi"/></svg></i><i><svg width="12" height="12"><use href="#pl"/></svg></i></div></div>
            </div>
            <div class="sect d-flex align-items-center"><svg width="12" height="12"><use href="#dn"/></svg><span class="fit" data-w="70">Soft Edge</span></div>
            <div class="sect d-flex align-items-center"><svg width="12" height="12"><use href="#up"/></svg><span class="fit" data-w="29">Line</span><svg class="gear" width="12" height="12"><use href="#gear"/></svg></div>
            <div class="sectbody" style="height:254px;padding-right:5px">
              <div class="d-flex align-items-center" style="height:53px"><span class="fit" data-w="31">Line:</span><span class="bg-white ms-auto" style="width:90px;height:15px"></span><b class="car" style="margin:0 7px 0 9px"></b></div>
              <div class="d-flex align-items-center" style="height:42px"><span class="fit" data-w="44">Width:</span><span class="ms-auto" style="width:76px;height:1px;background:#333"></span><b class="car" style="margin:0 7px 0 9px"></b></div>
              <div class="d-flex align-items-center" style="height:48px"><span class="fit" data-w="41">Color:</span><svg class="ms-auto" width="16" height="16" viewBox="-12 -12 24 24"><use href="#pal"/></svg><span style="width:60px;height:12px;background:#3465a4;border:1px solid #777;margin-left:2px"></span><b class="car" style="margin:0 7px 0 11px"></b></div>
              <div class="d-flex align-items-center justify-content-between"><span class="fit" data-w="93">Transparency:</span><div class="spin" style="width:157px"><span>0%</span><i class="dis"><svg width="12" height="12"><use href="#mi"/></svg></i><i><svg width="12" height="12"><use href="#pl"/></svg></i></div></div>
              <div class="hair" style="margin-top:6px"></div>
              <div class="lab d-flex align-items-center"><span style="width:163px"><span class="fit" data-w="84">Corner style:</span></span><span class="fit" data-w="64">Cap style:</span></div>
              <div class="d-flex justify-content-between"><div class="combo" style="width:157px"><span class="fit" data-w="59">Rounded</span><b class="car"></b></div><div class="combo" style="width:157px"><span class="fit" data-w="25">Flat</span><b class="car"></b></div></div>
            </div>
            <div class="sect d-flex align-items-center"><svg width="12" height="12"><use href="#dn"/></svg><span class="fit" data-w="120">Position and Size</span><svg class="gear" width="12" height="12"><use href="#gear"/></svg></div>
          </div>
          <div class="track"><div class="thumbbar" style="height:726px;margin:5px 3px"></div></div>
        </div>
      </div>
      <div class="tabs">
        <svg width="4" height="18" style="margin:0 0 9px 19px" fill="none" stroke="#555"><circle cx="2" cy="3" r="1.500"/><circle cx="2" cy="9" r="1.500"/><circle cx="2" cy="15" r="1.500"/></svg>
        <div class="hair" style="width:22px;margin-left:10px"></div>
        <div class="tabcell cur"><svg width="26" height="26"><use href="#s-props"/></svg></div>
        <div class="tabcell"><svg width="26" height="26"><use href="#i-trans"/></svg></div>
        <div class="tabcell"><svg width="26" height="26"><use href="#s-anim"/></svg></div>
        <div class="tabcell"><svg width="26" height="26"><use href="#i-master"/></svg></div>
        <div class="tabcell"><svg width="26" height="26"><use href="#s-style"/></svg></div>
        <div class="tabcell"><svg width="26" height="26"><use href="#s-gal"/></svg></div>
        <div class="tabcell"><svg width="26" height="26"><use href="#s-nav"/></svg></div>
      </div>
    </div>
  </div>

  <footer class="status d-flex align-items-center" style="padding-left:10px;margin-top:1px">
    <span class="fit" data-w="67.500">Slide 1 of 48</span><u style="margin:0 8px 0 5px"></u>
    <span style="width:371px"><span class="fit" data-w="142">Image 'Picture 1' selected</span></span><u></u>
    <span style="width:218px;margin-left:8px"><span class="fit" data-w="30">Blank</span></span><u></u>
    <svg width="16" height="13" style="margin:0 5px 0 8px" fill="none" stroke="#555"><path d="M5.500 4.500h10v7h-11v-4"/><path d="M3.500 0v7M0 3.500h7" stroke="#5aa5c0"/></svg>
    <span class="fit" data-w="58">1.27 / 1.91</span>
    <svg width="16" height="13" style="margin:0 5px 0 26px" fill="none" stroke="#555"><path d="M4.500 4.500h10v7h-10z"/><path d="M4.500 2h11M3 1v3M1.500 4v8M15 0v4M0 4h3M0 12h3" stroke="#3b7d95"/></svg>
    <span class="fit" data-w="74">23.37 x 15.24</span><u style="margin:0 7px 0 6px"></u>
    <svg width="10" height="12" fill="none" stroke="#555"><path d="M3.500.500h3v5h2.500L5 9.500 1 5.500h2.500zM1 11.500h8"/></svg><u style="margin:0 28px 0 5px"></u><u></u>
    <span style="width:174px;margin-left:99px"><span class="fit" data-w="76">English (India)</span></span><u></u>
    <svg width="14" height="14" viewBox="-7 -7 14 14" style="margin:0 2px 0 4px"><path d="M-6 0H6M0-6V6" stroke="#e8541c" stroke-width="1.600"/><path d="M-7 0l3-3v6zM7 0L4-3v6zM0-7l3 3h-6zM0 7l3-3h-6z" fill="#e8541c"/></svg><u></u>
    <svg width="126" height="12" viewBox="0 0 126 12" style="margin-left:10px"><path d="M0 6h8M117 6h8M121 2v8" stroke="#444" stroke-width="2"/><path d="M14 6h97" stroke="#999" stroke-width="1.500"/><path d="M61.500 3v6" stroke="#888" stroke-width="1.500"/><circle cx="53" cy="6" r="4" fill="#fff" stroke="#555" stroke-width="1.300"/></svg><u style="margin:0 11px 0 6px"></u>
    <span class="fit" data-w="24">84%</span>
  </footer>
</section>

<script src="https://cdn.jsdelivr.net/npm/bootstrap@5.3.0/dist/js/bootstrap.bundle.min.js"></script>
<script>
// Toolbars: "*" split button, "!" pressed, "~" disabled split, "^" wide split, "|" separator, "_" blank gap
function bar(id, list){
  document.getElementById(id).innerHTML = list.split(' ').map(function(t){
    if(t==='|') return '<span class="tsep"></span>';
    if(t==='_') return '<span style="width:8px"></span>';
    var k=t.replace(/[*!~^]/g,''), split=/[*~^]/.test(t);
    return '<span class="tb'+(split?' split':'')+(t.indexOf('!')>0?' on':'')+(t.indexOf('~')>0?' off':'')+(t.indexOf('^')>0?' wide':'')+'"><svg width="26" height="26"'+(t.indexOf('^')>0?' class="ms-1 me-1"':'')+'><use href="#i-'+k+'"/></svg>'+(split?'<b class="dd"></b>':'')+'</span>';
  }).join('');
}
bar('tools1','new* open* save* | pdf print | cut copy paste* | clone | undo~ redo~ | find spell | grid views^ master | play pause | table* image video chart | text omega~ font link brush! _ newslide* dup del | layout*');
bar('tools2','select! zoom | linecol* fillcol* | line rect oval | arrow* curve* conn* | diamond* smile* dbl* flow* call* star* cube* | rot align* arr* dist | shadow crop wand* | pts glue ext');

// Places sidebar
var pi={
 Recent:'<path d="M3 4a6.500 6.500 0 1 1-1 5M8 4.500V8l2.500 2M1 2l1.500 3L6 4"/>',
 Starred:'<path d="M8 1l2 5h5l-4 3.200 1.500 5.300L8 11.300 3.500 14.500 5 9.200 1 6h5z" fill="#8a8a8a" stroke="none"/>',
 Home:'<path d="M.500 8L8 .500 15.500 8M2.500 7v8h11V7M12.500 1v4"/><path d="M8 9.500h3V15H8z" fill="#8a8a8a"/>',
 Desktop:'<rect x=".500" y="2.500" width="15" height="12" rx="1.500"/><path d="M1 3h3v11H1z" fill="#8a8a8a"/>',
 Documents:'<path d="M2 1.500h8.500l3.500 3.500v9.500H2zM4 6.500h8M4 9h8M4 11.500h5M10.500 1.500V5H14"/>',
 Downloads:'<path d="M6.500 1.500h3v6.500H12l-4 5-4-5h2.500zM4 15.500h9"/>',
 Music:'<path d="M5.500 12.500V2.500l8-1v10" /><circle cx="3.500" cy="13" r="2" fill="#8a8a8a"/><circle cx="11.500" cy="12" r="2" fill="#8a8a8a"/>',
 Pictures:'<rect x=".500" y="2.500" width="15" height="12" rx="1.500"/><path d="M3.500 11l3-4 2 2 1.500-1.500 2.500 3.500z" fill="#8a8a8a"/><circle cx="11.500" cy="5.500" r=".800" fill="#8a8a8a"/>',
 Videos:'<path d="M1.500 2v12.500M14.500 2v12.500M3.500 2v12.500h9V2zM3.500 8h9M1 3.500h2M1 6.500h2M1 9.500h2M1 12.500h2M13 3.500h2M13 6.500h2M13 9.500h2M13 12.500h2"/>',
 Trash:'<path d="M1 3.500h13M5 3V1.500h5V3M2.500 4v11H9M5.500 7v5M7.500 7v5M10 6v3M12.500 4v4"/><circle cx="12.500" cy="13" r="2.200"/>',
 'kritisahu26@gmail.…':'<path d="M1.500 1.500h13v4h-13zM1.500 6.500h13v4h-13zM1.500 11.500h13v4h-13zM10 3.500h3M10 8.500h3M10 13.500h3"/>',
 'Other Locations':'<path d="M2.500 8.500h12M8.500 3v11"/>'
}, pw={Recent:46,Starred:51,Home:40,Desktop:57,Documents:76,Downloads:74,Music:39,Pictures:55,Videos:47,Trash:37,'kritisahu26@gmail.…':145,'Other Locations':107};
document.getElementById('places').innerHTML=Object.keys(pi).map(function(k){
  return (/^(kriti|Other)/.test(k)?'<div class="placeline"></div>':'')+'<div class="place"><svg width="16" height="16" fill="none" stroke="#8a8a8a">'+pi[k]+'</svg><span class="fit" data-w="'+pw[k]+'">'+k+'</span></div>';
}).join('');

// Slide thumbnails
function T(s,x,y,w,f,c){return '<text x="'+x+'" y="'+y+'" text-anchor="middle" textLength="'+w+'" lengthAdjust="spacingAndGlyphs" font-family="Lato,sans-serif" font-size="'+f+'" fill="'+(c||'#444')+'">'+s+'</text>';}
var axis='<path d="M14 73.500H115.500" stroke="#7d93bd"/><g fill="#a8323f">'+[21,41.300,49,53,57.500,61,64,67.700,71.700,76,82.700,98.700,107].map(function(x){return '<circle cx="'+x+'" cy="73.500" r="2.100"/>';}).join('')+'</g><path d="M23 78.500h31M74 78.500h34" stroke="#7d93bd" stroke-width=".8"/>'+T('Low',16.500,79.500,5,3)+T('Mouse weight',64,79.500,17,3)+T('High',112,79.500,5,3);
var lots=T('There are lots of different types of distributions',64,22,56,3.200)+T('for different types of data...',64,26,32,3.200);
var bell='<path d="M7 50c12 0 12-20.500 19.500-20.500S34 50 46 50" fill="none" stroke="#e39aa5" stroke-width=".9"/>'+T('Normal',25.500,55,9,3);
var expo='<path d="M47.500 30c1 10 5 20.500 13 20.500h19" fill="none" stroke="#a5d3a0" stroke-width=".9"/>'+T('Exponential',63,55,14,3);
var fan='<g stroke="#8aa0c6" stroke-width=".9">'+[[46.500,60],[57,60.500],[65.500,60],[71.500,60],[85,60]].map(function(p){return '<path d="M63 30L'+p[0]+' '+p[1]+'"/><circle cx="'+p[0]+'" cy="'+p[1]+'" r=".7"/>';}).join('')+'</g>';
var pics=[T('StatQuest: Maximum Likelihood',64,50.500,92,7.500,'#222'),
 T("Let's say we weighed a bunch of mice...",64,25,46,3.200)+fan+axis,
 T('The goal of maximum likelihood is to find the',64,22,53,3.200)+T('optimal way to fit a distribution to the data.',64,26,51,3.200)+axis,
 lots+axis, lots+bell+axis, lots+bell+expo+axis, T('There are lots of different types of distributions',64,21,56,3.200)];
document.getElementById('slides').innerHTML=pics.map(function(p,i){
  return '<div class="slrow d-flex'+(i?'':' sel')+'"><span class="slno">'+(i+1)+'</span><div class="sheet"><svg width="127" height="96">'+p+'</svg></div></div>';
}).join('');

// Spread each label's letters over its nominal width
document.querySelectorAll('.fit').forEach(function(e){
  var w=+e.dataset.w, n=e.textContent.length;
  e.style.letterSpacing=((w-e.getBoundingClientRect().width)/n).toFixed(3)+'px';
});
</script>
</body>
</html>
